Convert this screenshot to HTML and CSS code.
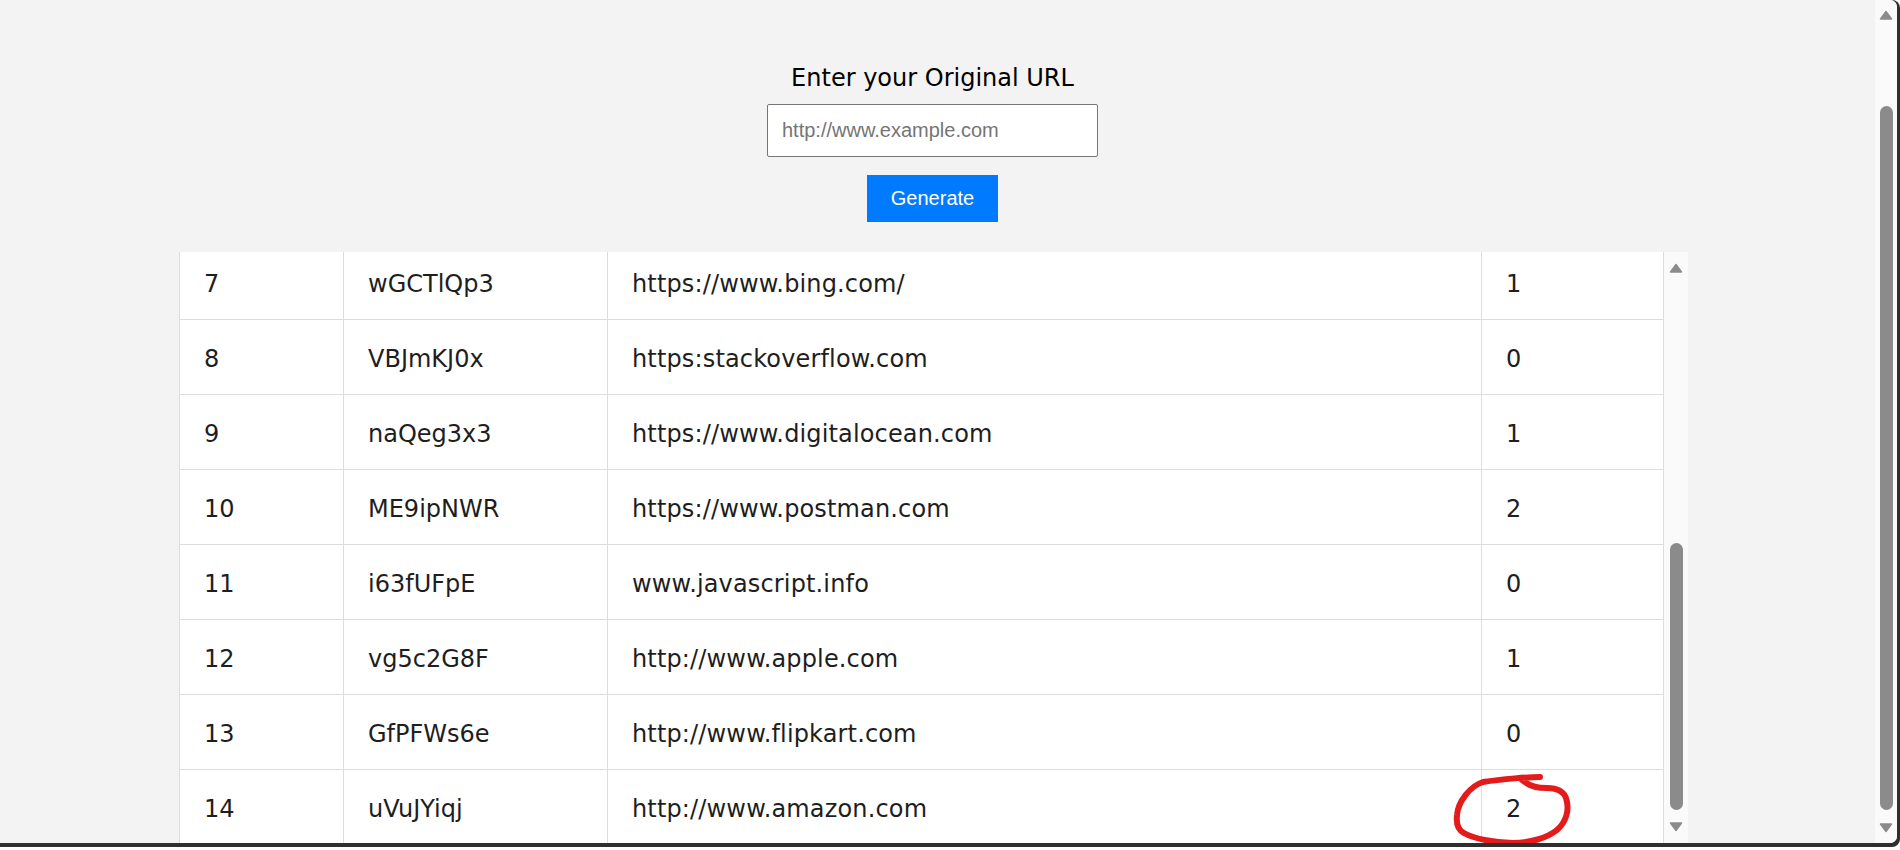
FILE: index.html
```html
<!DOCTYPE html>
<html lang="en">
<head>
<meta charset="utf-8">
<title>URL Shortener</title>
<link rel="stylesheet" href="styles.css">
</head>
<body>
<div class="window">
  <div class="viewport">
    <main class="page">
      <h1 class="title">Enter your Original URL</h1>
      <form class="form">
        <input class="url-input" type="text" placeholder="http://www.example.com">
        <button class="btn" type="button">Generate</button>
      </form>
      <div class="table-box">
        <div class="table-clip">
          <table class="urls">
            <colgroup>
              <col class="c-id"><col class="c-code"><col class="c-url"><col class="c-count">
            </colgroup>
            <tbody>
              <tr><td>7</td><td>wGCTlQp3</td><td>https://www.bing.com/</td><td>1</td></tr>
              <tr><td>8</td><td>VBJmKJ0x</td><td>https:stackoverflow.com</td><td>0</td></tr>
              <tr><td>9</td><td>naQeg3x3</td><td>https://www.digitalocean.com</td><td>1</td></tr>
              <tr><td>10</td><td>ME9ipNWR</td><td>https://www.postman.com</td><td>2</td></tr>
              <tr><td>11</td><td>i63fUFpE</td><td>www.javascript.info</td><td>0</td></tr>
              <tr><td>12</td><td>vg5c2G8F</td><td>http://www.apple.com</td><td>1</td></tr>
              <tr><td>13</td><td>GfPFWs6e</td><td>http://www.flipkart.com</td><td>0</td></tr>
              <tr><td>14</td><td>uVuJYiqj</td><td>http://www.amazon.com</td><td class="marked">2<svg class="scribble" width="125" height="76" viewBox="0 0 125 76"><path d="M88 5 C78 5 50 7 31 10 C18 14 6 30 5 43 C4 52 6 58 12 61 C22 67 45 71 61 71 C78 71 95 66 105 58 C114 50 118 38 114 26 C111 18 104 16 95 16 C88 16 80 16 70 8" fill="none" stroke="#e31b1b" stroke-width="6" stroke-linecap="round" stroke-linejoin="round"/></svg></td></tr>
            </tbody>
          </table>
        </div>
        <div class="sb sb-table">
          <div class="sb-btn"><svg width="14" height="10" viewBox="0 0 14 10"><path d="M7 1.5 L12.5 9 H1.5 Z" fill="#8b8b8b" stroke="#8b8b8b" stroke-width="1.5" stroke-linejoin="round"/></svg></div>
          <div class="sb-track sb-track-table"><div class="sb-thumb thumb-table"></div></div>
          <div class="sb-btn"><svg width="14" height="10" viewBox="0 0 14 10"><path d="M7 8.5 L12.5 1 H1.5 Z" fill="#8b8b8b" stroke="#8b8b8b" stroke-width="1.5" stroke-linejoin="round"/></svg></div>
        </div>
      </div>
    </main>
    <div class="sb sb-page">
      <div class="sb-btn"><svg width="14" height="10" viewBox="0 0 14 10"><path d="M7 1.5 L12.5 9 H1.5 Z" fill="#8b8b8b" stroke="#8b8b8b" stroke-width="1.5" stroke-linejoin="round"/></svg></div>
      <div class="sb-track sb-track-page"><div class="sb-thumb thumb-page"></div></div>
      <div class="sb-btn"><svg width="14" height="10" viewBox="0 0 14 10"><path d="M7 8.5 L12.5 1 H1.5 Z" fill="#8b8b8b" stroke="#8b8b8b" stroke-width="1.5" stroke-linejoin="round"/></svg></div>
    </div>
  </div>
</div>
</body>
</html>
```
FILE: styles.css
```css
* { box-sizing: border-box; }

html, body {
  margin: 0;
  padding: 0;
  background: #ffffff;
  overflow: hidden;
}

.window {
  height: 847px;
  width: 1900px;
  background: #2f2f2f;
  padding: 0 3px 4px 0;
  border-bottom-right-radius: 8px;
  border-top-right-radius: 8px;
}

.viewport {
  display: flex;
  height: 843px;
  background: #f3f3f3;
  overflow: hidden;
  border-top-right-radius: 7px;
  border-bottom-right-radius: 7px;
}

.page {
  flex: 1;
  display: flex;
  flex-direction: column;
  align-items: center;
  padding: 64px 8px 0 0;
  min-width: 0;
}

.title {
  margin: 0 2px 0 0;
  font-family: "DejaVu Sans", Verdana, sans-serif;
  font-size: 24px;
  font-weight: normal;
  line-height: 28px;
  color: #000;
}

.form {
  display: flex;
  flex-direction: column;
  align-items: center;
  gap: 18px;
  margin: 12px 2px 0 0;
}

.url-input {
  width: 331px;
  height: 53px;
  border: 1px solid #767676;
  border-radius: 2px;
  padding: 0 14px;
  font-family: "Liberation Sans", Arial, sans-serif;
  font-size: 20px;
  color: #000;
  background: #fff;
  outline: none;
}

.url-input::placeholder {
  color: #757575;
}

.btn {
  width: 131px;
  height: 47px;
  border: none;
  border-radius: 0;
  background: #007bff;
  color: #fff;
  font-family: "Liberation Sans", Arial, sans-serif;
  font-size: 20px;
  padding: 0;
}

.table-box {
  margin-top: 30px;
  width: 1509px;
  height: 591px;
  display: flex;
  flex-shrink: 0;
}

.table-clip {
  width: 1485px;
  height: 591px;
  overflow: hidden;
  background: #fff;
}

.urls {
  table-layout: fixed;
  border-collapse: separate;
  border-spacing: 0;
  width: 1485px;
  margin-top: -7px;
  font-family: "DejaVu Sans", Verdana, sans-serif;
  font-size: 24px;
  color: #1e1e1e;
}

.c-id { width: 165px; }
.c-code { width: 264px; }
.c-url { width: 874px; }
.c-count { width: 182px; }

.urls td {
  height: 75px;
  padding: 3px 24px 0;
  border-right: 1px solid #dddddd;
  border-bottom: 1px solid #dddddd;
  vertical-align: middle;
  white-space: nowrap;
  line-height: 28px;
}

.urls td:first-child {
  border-left: 1px solid #dddddd;
}

.urls td:nth-child(3) {
  letter-spacing: 0.15px;
}

.urls td.marked {
  position: relative;
}

.scribble {
  position: absolute;
  left: -30px;
  top: 2px;
  pointer-events: none;
}

.sb {
  display: flex;
  flex-direction: column;
  background: #fafafa;
  flex-shrink: 0;
}

.sb-table {
  width: 24px;
  height: 591px;
}

.sb-page {
  width: 22px;
  height: 843px;
}

.sb-btn {
  height: 32px;
  display: flex;
  align-items: center;
  justify-content: center;
  flex-shrink: 0;
}

.sb-page .sb-btn {
  height: 30px;
}

.sb-track {
  flex: 1;
  display: flex;
  flex-direction: column;
  align-items: center;
}

.sb-thumb {
  width: 13px;
  background: #8b8b8b;
  border-radius: 7px;
}

.sb-track-table { padding-top: 259px; }
.thumb-table { height: 267px; }

.sb-track-page { padding-top: 76px; }
.thumb-page { height: 704px; }
```
